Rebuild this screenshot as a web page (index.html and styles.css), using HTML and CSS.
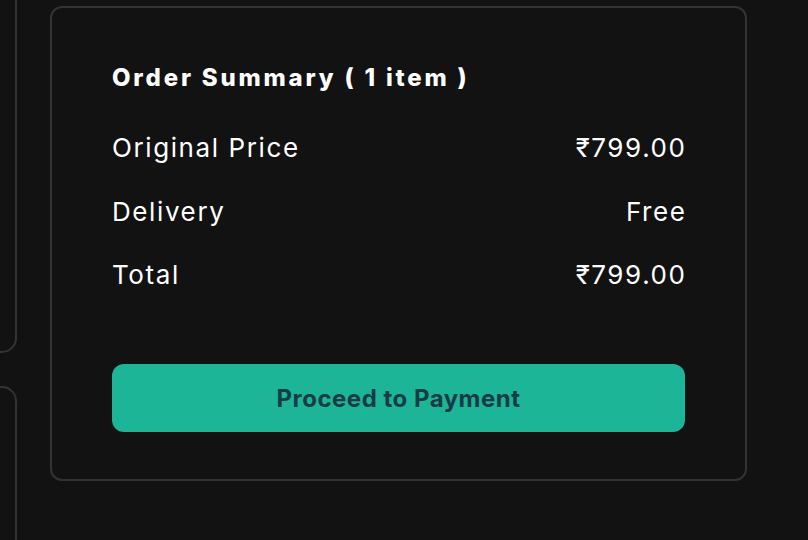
FILE: index.html
```html
<!DOCTYPE html>
<html lang="en">
<head>
    <meta charset="UTF-8">
    <meta name="viewport" content="width=device-width, initial-scale=1.0">
    <title>Cart</title>
    <link rel="stylesheet" href="styles.css">
</head>
<body>
    <div class="page">
        <div class="cart-items">
            <div class="item-card"></div>
            <div class="item-card"></div>
        </div>

        <div class="summary">
            <h2 class="summary-title">Order Summary ( 1 item )</h2>

            <div class="summary-row">
                <span>Original Price</span>
                <span>&#8377;799.00</span>
            </div>
            <div class="summary-row">
                <span>Delivery</span>
                <span>Free</span>
            </div>
            <div class="summary-row">
                <span>Total</span>
                <span>&#8377;799.00</span>
            </div>

            <button class="pay-btn">Proceed to Payment</button>
        </div>
    </div>
</body>
</html>
```

FILE: styles.css
```css
body {
    font-family: 'Inter', 'Noto Sans', sans-serif;
    margin: 0;
    padding: 0;
    background-color: #121212;
    color: #ffffff;
}

.page {
    display: flex;
    gap: 33px;
    padding-top: 6px;
    height: 100vh;
    box-sizing: border-box;
    overflow: hidden;
}

.cart-items {
    display: flex;
    flex-direction: column;
    gap: 33px;
    width: 300px;
    margin-left: -283px;
    margin-top: -40px;
    flex-shrink: 0;
}

.item-card {
    height: 387px;
    flex-shrink: 0;
    border: 2px solid #333333;
    border-radius: 15px;
    box-sizing: border-box;
}

.summary {
    width: 697px;
    height: 475px;
    box-sizing: border-box;
    border: 2px solid #333333;
    border-radius: 12px;
    padding: 52px 60px 0 60px;
    flex-shrink: 0;
}

.summary-title {
    font-size: 24px;
    font-weight: 800;
    letter-spacing: 2.8px;
    margin: 0 0 34px 0;
    line-height: 36px;
}

.summary-row {
    display: flex;
    justify-content: space-between;
    font-size: 26px;
    font-weight: 400;
    letter-spacing: 1.6px;
    line-height: 36px;
    margin-bottom: 27.5px;
}

/* last letter's spacing would push the right column off the edge */
.summary-row span:last-child {
    margin-right: -1.6px;
}

.pay-btn {
    display: block;
    width: 100%;
    height: 68px;
    margin-top: 71px;
    border: none;
    border-radius: 12px;
    background-color: #1db597;
    color: #173b48;
    font-family: inherit;
    font-size: 24px;
    font-weight: 700;
    letter-spacing: 0.5px;
    cursor: pointer;
}
```
